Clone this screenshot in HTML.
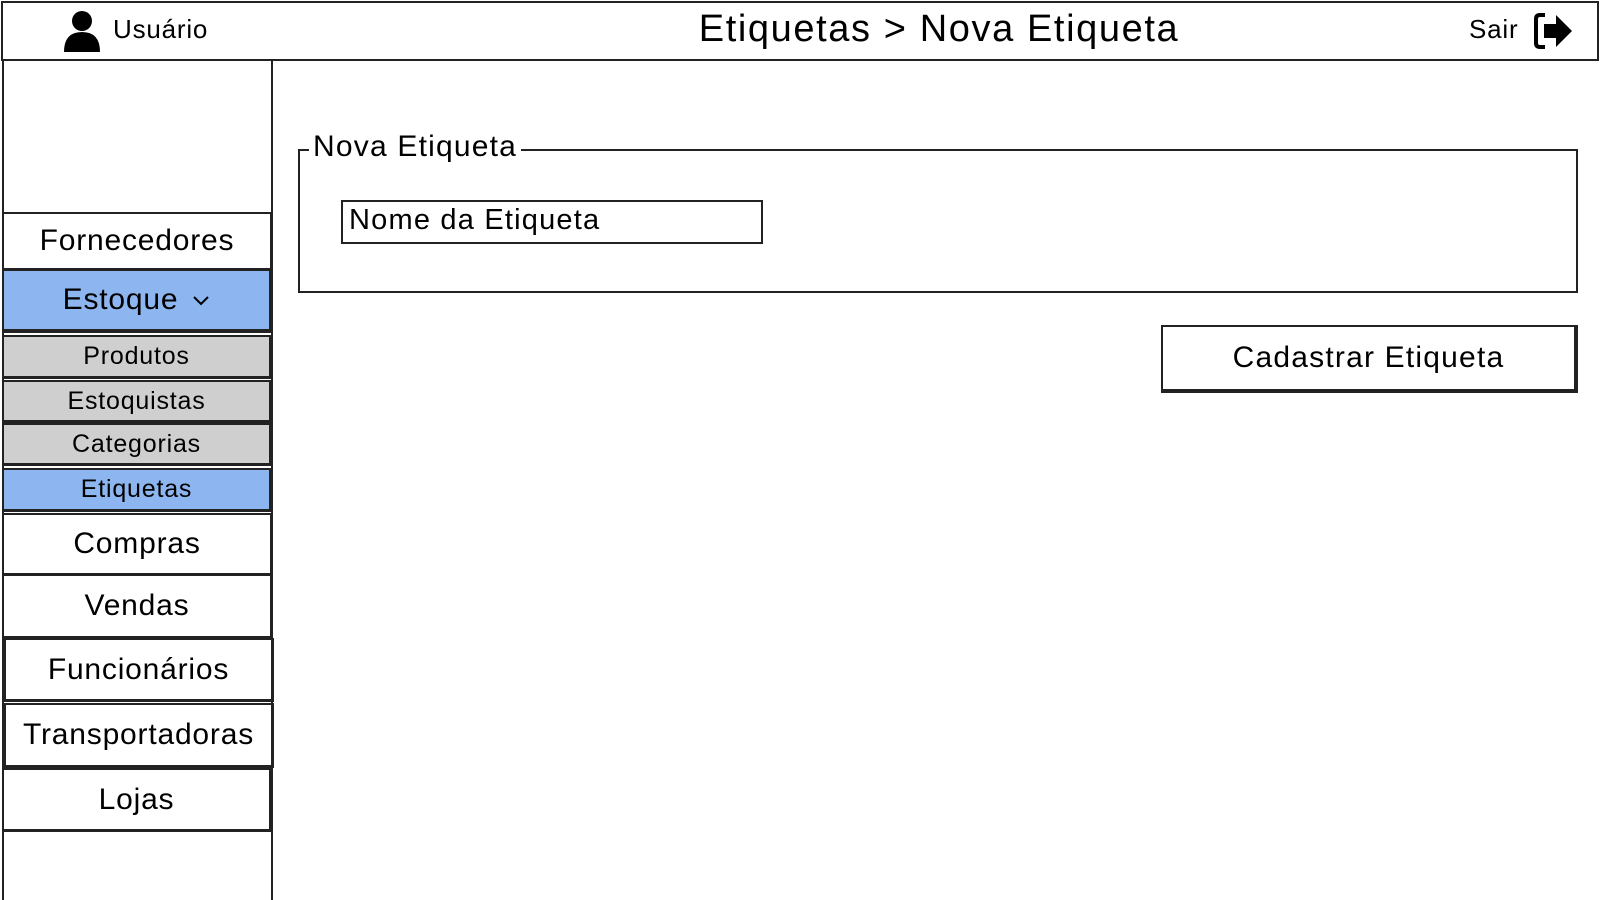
<!DOCTYPE html>
<html><head><meta charset="utf-8"><style>
*{box-sizing:border-box;margin:0;padding:0}
body{width:1600px;height:900px;background:#fff;font-family:"Liberation Sans",sans-serif;color:#000;position:relative;overflow:hidden;letter-spacing:0.8px}
.a{position:absolute}
.top{left:1px;top:1px;width:1598px;height:60px;border:2px solid #222}
.side{left:2px;top:60px;width:271px;height:840px;border-right:2px solid #222;border-left:2px solid #222}
.it{position:absolute;left:2px;width:270px;border:2px solid #222;display:flex;align-items:center;justify-content:center;font-size:30px}
.sub{background:#cfcfcf;font-size:25px;border-width:2px 3px 3px 2px}
.blue{background:#8db5ef}
</style></head><body>
<div class="a top"></div>
<svg class="a" style="left:62px;top:10px" width="40" height="42" viewBox="0 0 40 42"><circle cx="20" cy="11" r="10"/><path d="M2 42 Q2 22 20 22 Q38 22 38 42Z"/></svg>
<div class="a" style="left:113px;top:14px;font-size:26px">Usuário</div>
<div class="a" style="left:600px;width:678px;top:8px;font-size:38px;text-align:center;letter-spacing:1.6px">Etiquetas &gt; Nova Etiqueta</div>
<div class="a" style="left:1469px;top:14px;font-size:26px">Sair</div>
<svg class="a" style="left:1532px;top:12px" width="44" height="38" viewBox="0 0 44 38"><path d="M13 3 H8 Q4 3 4 7 V31 Q4 35 8 35 H13" fill="none" stroke="#000" stroke-width="4"/><path d="M12 12 H24 V3 L40 19 L24 35 V26 H12Z"/></svg>
<div class="a side"></div>
<div class="it" style="top:212px;height:58px">Fornecedores</div>
<div class="it blue" style="top:269px;height:64px;border-width:2px 3px 4px 2px">Estoque <svg style="margin-left:14px" width="18" height="12" viewBox="0 0 18 12"><path d="M2 3 L9 10 L16 3" fill="none" stroke="#000" stroke-width="2"/></svg></div>
<div class="it sub" style="top:335px;height:44px">Produtos</div>
<div class="it sub" style="top:380px;height:43px">Estoquistas</div>
<div class="it sub" style="top:423px;height:43px">Categorias</div>
<div class="it sub blue" style="top:468px;height:44px">Etiquetas</div>
<div class="it" style="top:513px;height:62px">Compras</div>
<div class="it" style="top:574px;height:64px">Vendas</div>
<div class="it" style="top:638px;height:64px;left:4px;border-width:2px 3px 3px 2px">Funcionários</div>
<div class="it" style="top:703px;height:65px;left:4px;border-width:2px 3px 3px 2px">Transportadoras</div>
<div class="it" style="top:768px;height:64px;border-width:2px 3px 3px 2px">Lojas</div>
<div class="a" style="left:298px;top:149px;width:1280px;height:144px;border:2px solid #222"></div>
<div class="a" style="left:309px;top:130px;background:#fff;padding:0 4px;font-size:30px;letter-spacing:1.2px">Nova Etiqueta</div>
<div class="a" style="left:341px;top:200px;width:422px;height:44px;border:2px solid #222;font-size:29px;padding:2px 6px;letter-spacing:1.2px">Nome da Etiqueta</div>
<div class="a" style="left:1161px;top:325px;width:417px;height:68px;border:2px solid #222;border-width:2px 4px 4px 2px;font-size:30px;display:flex;align-items:center;justify-content:center;letter-spacing:1.2px">Cadastrar Etiqueta</div>
</body></html>
